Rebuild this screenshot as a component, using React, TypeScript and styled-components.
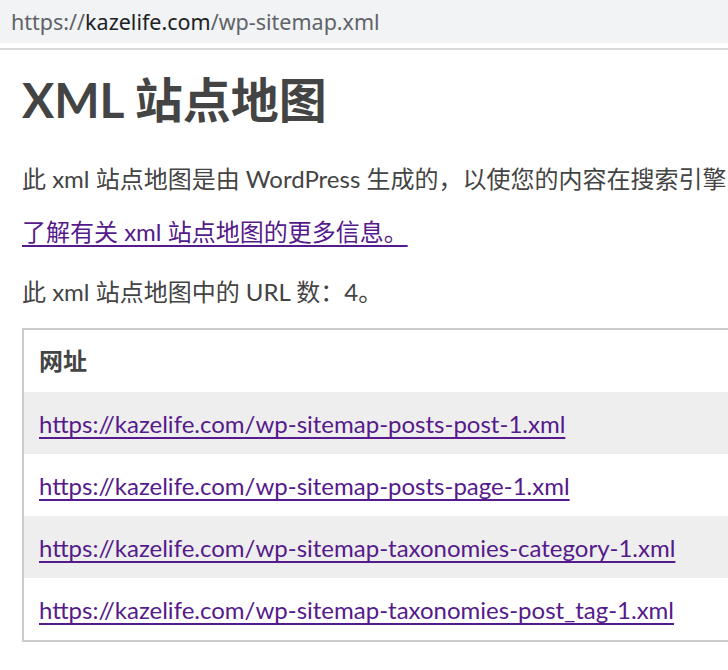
import React from "react";
import styled, { createGlobalStyle } from "styled-components";

const Global = createGlobalStyle`
  html, body { margin: 0; padding: 0; background: #fff; overflow: hidden; }
  body { width: 728px; height: 670px; }
`;

const Page = styled.div`
  font-family: Lato, "Noto Sans CJK SC", sans-serif;
  color: #444;
  width: 728px;
  overflow: hidden;
`;

const AddressBar = styled.div`
  height: 43px;
  background: #f1f3f4;
  display: flex;
  align-items: center;
  padding-left: 11px;
  font-family: "Noto Sans", sans-serif;
  font-size: 21.5px;
  color: #5f6368;
  white-space: nowrap;
`;

const Host = styled.span`
  color: #202124;
`;

const Divider = styled.div`
  margin-top: 5px;
  height: 2px;
  background: #dadada;
`;

const Content = styled.div`
  padding: 0 0 0 22px;
  width: 1000px;
`;

const Title = styled.h1`
  font-size: 48px;
  font-weight: 700;
  line-height: 64px;
  margin: 18px 0 31px;
`;

const Para = styled.p<{ $gap: number }>`
  font-size: 24px;
  line-height: 32px;
  margin: 0 0 ${(p) => p.$gap}px;
  white-space: nowrap;
`;

const Link = styled.a`
  color: #551a8b;
  text-decoration: underline;
  text-decoration-thickness: 2px;
  text-underline-offset: 4px;
`;

const Table = styled.table`
  width: 980px;
  border: solid 2px #ccc;
  border-collapse: collapse;
  font-size: 24px;
  line-height: 32px;
`;

const Th = styled.th`
  text-align: left;
  padding: 15px 15px;
  font-weight: 700;
`;

const Row = styled.tr<{ $odd: boolean }>`
  background: ${(p) => (p.$odd ? "#eee" : "#fff")};
`;

const Td = styled.td`
  padding: 16px 15px 14px;
`;

const urls = [
  "https://kazelife.com/wp-sitemap-posts-post-1.xml",
  "https://kazelife.com/wp-sitemap-posts-page-1.xml",
  "https://kazelife.com/wp-sitemap-taxonomies-category-1.xml",
  "https://kazelife.com/wp-sitemap-taxonomies-post_tag-1.xml",
];

export default function App() {
  return (
    <Page>
      <Global />
      <AddressBar>
        https://<Host>kazelife.com</Host>/wp-sitemap.xml
      </AddressBar>
      <Divider />
      <Content>
        <Title>XML 站点地图</Title>
        <Para $gap={21}>此 xml 站点地图是由 WordPress 生成的，以使您的内容在搜索引擎中更容易被找到。</Para>
        <Para $gap={28}>
          <Link href="#">了解有关 xml 站点地图的更多信息。</Link>
        </Para>
        <Para $gap={20}>此 xml 站点地图中的 URL 数：4。</Para>
        <Table>
          <thead>
            <tr>
              <Th>网址</Th>
            </tr>
          </thead>
          <tbody>
            {urls.map((u, i) => (
              <Row key={u} $odd={i % 2 === 0}>
                <Td>
                  <Link href="#">{u}</Link>
                </Td>
              </Row>
            ))}
          </tbody>
        </Table>
      </Content>
    </Page>
  );
}
